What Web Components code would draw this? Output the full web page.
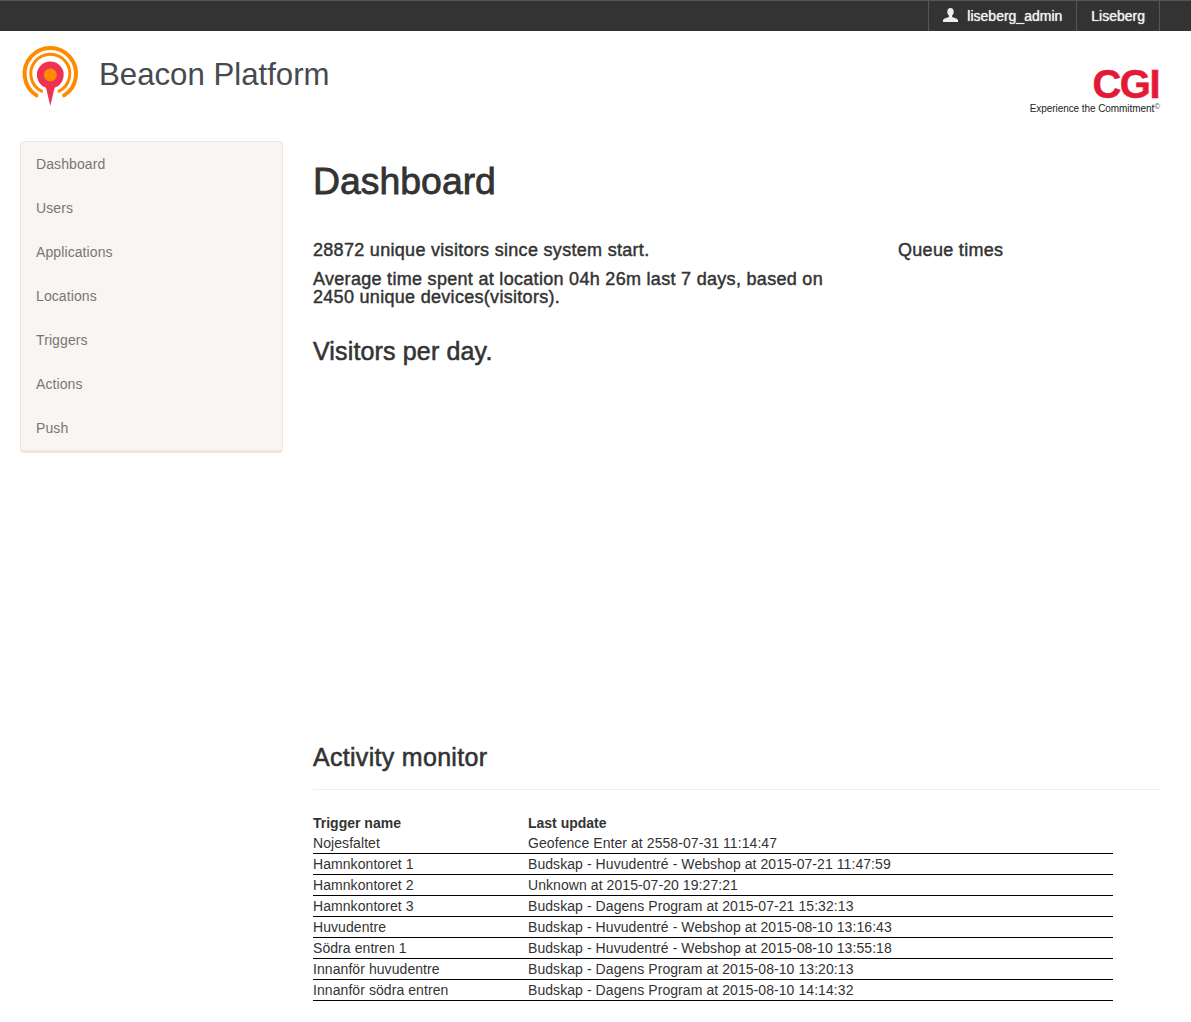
<!DOCTYPE html>
<html>
<head>
<meta charset="utf-8">
<title>Beacon Platform</title>
<style>
    html, body { margin: 0; padding: 0; background: #fff; }
    body { font-family: "Liberation Sans", Arial, sans-serif; }
</style>
</head>
<body>
<beacon-app></beacon-app>
<script>
class TopBar extends HTMLElement {
    constructor() {
        super()
        this.attachShadow({ mode: 'open' });
    }
    connectedCallback() {
        this.shadowRoot.innerHTML = `
            <style>
                :host {
                    display: flex;
                    justify-content: flex-end;
                    height: 30px;
                    padding-right: 31px;
                    background: #333;
                    border-top: 1px solid #555;
                    color: #f0f0f0;
                    font-size: 14px;
                }
                .item {
                    display: flex;
                    align-items: center;
                    gap: 9px;
                    padding: 0 14px;
                    border-left: 1px solid #555;
                    text-shadow: 0 0 1px #fff;
                }
                .item:last-child { border-right: 1px solid #555; }
                svg { display: block; margin-top: -2px; }
            </style>
            <div class="item">
                <svg width="15" height="15" viewBox="0 0 15 15"><path fill="#eee" d="M7.500 0C5.500 0 4.300 1.600 4.300 3.700c0 1.600.7 3 1.600 3.800v1.200C5 9.800 0 10 0 12.600V14h15v-1.400c0-2.600-5-2.800-5.900-3.900V7.500c.9-.8 1.600-2.200 1.600-3.800C10.700 1.600 9.500 0 7.500 0z"/></svg>
                <span>liseberg_admin</span>
            </div>
            <div class="item"><span>Liseberg</span></div>
        `;
    }
}

class BrandHeader extends HTMLElement {
    constructor() {
        super()
        this.attachShadow({ mode: 'open' });
    }
    connectedCallback() {
        this.shadowRoot.innerHTML = `
            <style>
                :host {
                    display: flex;
                    justify-content: space-between;
                    height: 110px;
                    padding: 0 31px 0 20px;
                }
                .brand { display: flex; align-items: flex-start; gap: 18px; }
                .brand svg { display: block; margin-top: 15px; }
                h1 {
                    margin: 23px 0 0;
                    font-size: 31.200px;
                    line-height: 42px;
                    font-weight: normal;
                    color: #454a50;
                }
                .cgi { display: flex; flex-direction: column; align-items: flex-end; padding-top: 33px; }
                .mark {
                    font-size: 40px;
                    line-height: 40px;
                    height: 38px;
                    font-weight: bold;
                    color: #e31937;
                    letter-spacing: -1.500px;
                    -webkit-text-stroke: .5px #e31937;
                    margin-right: 1px;
                }
                .tag { font-size: 10px; line-height: 12px; letter-spacing: -.07px; color: #222; margin-top: 1px; }
                sup { font-size: 8px; line-height: 0; vertical-align: 3px; color: #333; }
            </style>
            <div class="brand">
                <svg width="61" height="62" viewBox="0 0 61 62">
                    <g fill="none" stroke="#ff8a00" stroke-linecap="round">
                        <path stroke-width="4" d="M16.500 49.400A25.700 25.700 0 1 1 44.100 49.400"/>
                        <path stroke-width="3" d="M21.600 45.200A19.500 19.500 0 1 1 39 45.200"/>
                    </g>
                    <path fill="#ee3352" d="M30.300 15.500a13.500 13.500 0 0 1 4.300 26.300L30.300 60l-4.300-18.200A13.500 13.500 0 0 1 30.300 15.500z"/>
                    <circle cx="30.300" cy="29" r="6.500" fill="#ff8a00"/>
                </svg>
                <h1>Beacon Platform</h1>
            </div>
            <div class="cgi">
                <div class="mark">CGI</div>
                <div class="tag">Experience the Commitment<sup>©</sup></div>
            </div>
        `;
    }
}

class SideNav extends HTMLElement {
    constructor() {
        super()
        this.attachShadow({ mode: 'open' });
    }
    connectedCallback() {
        const items = ['Dashboard', 'Users', 'Applications', 'Locations', 'Triggers', 'Actions', 'Push'];
        this.shadowRoot.innerHTML = `
            <style>
                :host {
                    display: block;
                    flex: none;
                    box-sizing: border-box;
                    width: 263px;
                    height: 312px;
                    padding: 1px 0;
                    background: #f9f5f2;
                    border: 1px solid #f2e6dc;
                    border-bottom-width: 3px;
                    border-radius: 4px;
                    font-size: 14px;
                    letter-spacing: .1px;
                    color: #777;
                }
                a {
                    display: block;
                    height: 44px;
                    line-height: 42px;
                    padding-left: 15px;
                }
            </style>
            ${items.map(item => `<a>${item}</a>`).join('')}
        `;
    }
}

class ActivityTable extends HTMLElement {
    constructor() {
        super()
        this.attachShadow({ mode: 'open' });
    }
    connectedCallback() {
        const rows = [
            ['Nojesfaltet', 'Geofence Enter at 2558-07-31 11:14:47'],
            ['Hamnkontoret 1', 'Budskap - Huvudentré - Webshop at 2015-07-21 11:47:59'],
            ['Hamnkontoret 2', 'Unknown at 2015-07-20 19:27:21'],
            ['Hamnkontoret 3', 'Budskap - Dagens Program at 2015-07-21 15:32:13'],
            ['Huvudentre', 'Budskap - Huvudentré - Webshop at 2015-08-10 13:16:43'],
            ['Södra entren 1', 'Budskap - Huvudentré - Webshop at 2015-08-10 13:55:18'],
            ['Innanför huvudentre', 'Budskap - Dagens Program at 2015-08-10 13:20:13'],
            ['Innanför södra entren', 'Budskap - Dagens Program at 2015-08-10 14:14:32']
        ];
        this.shadowRoot.innerHTML = `
            <style>
                :host { display: block; width: 800px; font-size: 14px; color: #333; letter-spacing: .07px; }
                .row {
                    display: grid;
                    grid-template-columns: 215px 1fr;
                    height: 21px;
                    line-height: 20px;
                    box-sizing: border-box;
                    border-bottom: 1px solid #000;
                }
                .head { height: 20px; font-weight: bold; border-bottom: 0; letter-spacing: 0; }
            </style>
            <div class="row head"><span>Trigger name</span><span>Last update</span></div>
            ${rows.map(r => `<div class="row"><span>${r[0]}</span><span>${r[1]}</span></div>`).join('')}
        `;
    }
}

class DashboardView extends HTMLElement {
    constructor() {
        super()
        this.attachShadow({ mode: 'open' });
    }
    connectedCallback() {
        this.shadowRoot.innerHTML = `
            <style>
                :host { display: block; flex: 1; min-width: 0; color: #333; }
                h1 {
                    margin: 19px 0 0;
                    height: 81px;
                    font-size: 37.400px;
                    line-height: 42px;
                    font-weight: normal;
                    -webkit-text-stroke: .8px #333;
                }
                .stats { display: grid; grid-template-columns: 585px 1fr; height: 90px; }
                p {
                    margin: 0 0 11px;
                    max-width: 530px;
                    font-size: 18px;
                    line-height: 18px;
                    letter-spacing: .3px;
                    font-weight: normal;
                    -webkit-text-stroke: .45px #333;
                }
                h2 {
                    margin: 0;
                    font-size: 25px;
                    line-height: 40px;
                    letter-spacing: .15px;
                    font-weight: normal;
                    -webkit-text-stroke: .55px #333;
                }
                .chart { height: 366px; }
                .monitor { padding-bottom: 12px; margin-bottom: 23px; border-bottom: 1px solid #eee; letter-spacing: .3px; }
            </style>
            <h1>Dashboard</h1>
            <div class="stats">
                <div>
                    <p>28872 unique visitors since system start.</p>
                    <p>Average time spent at location 04h 26m last 7 days, based on 2450 unique devices(visitors).</p>
                </div>
                <p>Queue times</p>
            </div>
            <h2>Visitors per day.</h2>
            <div class="chart"></div>
            <h2 class="monitor">Activity monitor</h2>
            <activity-table></activity-table>
        `;
    }
}

class BeaconApp extends HTMLElement {
    constructor() {
        super()
        this.attachShadow({ mode: 'open' });
    }
    connectedCallback() {
        this.shadowRoot.innerHTML = `
            <style>
                :host { display: block; }
                main { display: flex; align-items: flex-start; gap: 30px; padding: 0 31px 0 20px; }
            </style>
            <top-bar></top-bar>
            <brand-header></brand-header>
            <main>
                <side-nav></side-nav>
                <dashboard-view></dashboard-view>
            </main>
        `;
    }
}

customElements.define('top-bar', TopBar);
customElements.define('brand-header', BrandHeader);
customElements.define('side-nav', SideNav);
customElements.define('activity-table', ActivityTable);
customElements.define('dashboard-view', DashboardView);
customElements.define('beacon-app', BeaconApp);
</script>
</body>
</html>
